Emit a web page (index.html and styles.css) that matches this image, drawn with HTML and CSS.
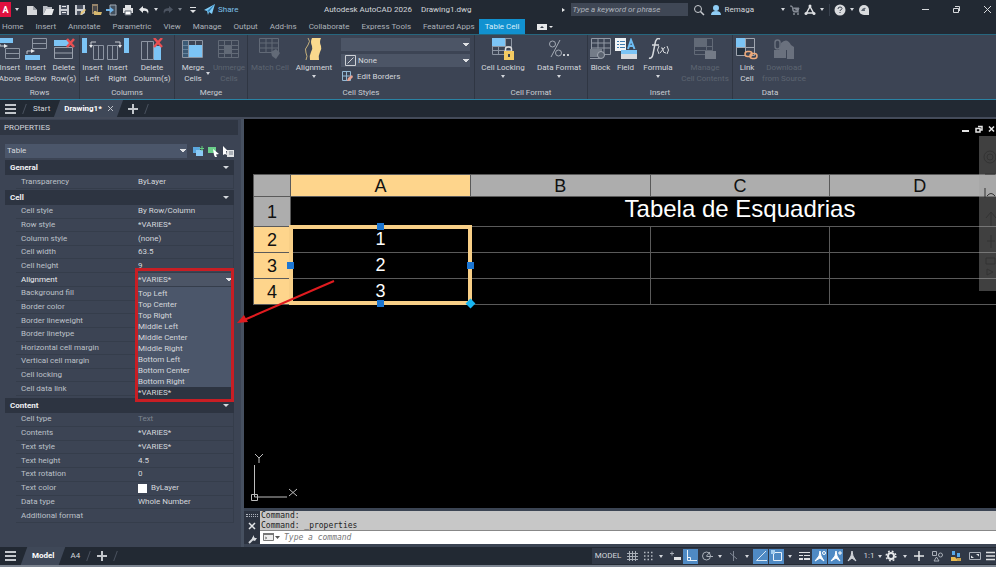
FILE: index.html
```html
<!DOCTYPE html>
<html lang="en">
<head>
<meta charset="utf-8">
<title>Autodesk AutoCAD 2026 - Drawing1.dwg</title>
<link rel="stylesheet" href="styles.css">
</head>
<body>
<header class="titlebar">
  <nav class="quick" aria-label="Quick access">
    <button class="logo" aria-label="Application menu">A</button>
    <i class="caret"></i>
    <button class="tool" aria-label="New"><svg width="12" height="12" viewBox="0 0 12 12"><path d="M1 2h6l4 4v5H1z" fill="#d5d7da"/><path d="M7 2v4h4z" fill="#9da1a8"/></svg></button>
    <button class="tool" aria-label="Open"><svg width="12" height="12" viewBox="0 0 12 12"><path d="M1 11V2h4l1 1h4v2H4z" fill="#b7bbc2"/><path d="M4 5h8l-2 6H1z" fill="#e6e7e9"/></svg></button>
    <button class="tool" aria-label="Save"><svg width="12" height="12" viewBox="0 0 12 12"><path d="M1 1h10v10H1z" fill="#c9ccd1"/><path d="M3 1h6v4H3zM3 7h6v4H3z" fill="#4b5260"/><path d="M4 8h4v1H4zM4 2h4v1H4z" fill="#e8e9ec"/></svg></button>
    <button class="tool" aria-label="Save as"><svg width="12" height="12" viewBox="0 0 12 12"><path d="M1 1h10v8L8 11H1z" fill="#c9ccd1"/><path d="M3 1h6v4H3zM3 7h4v4H3z" fill="#4b5260"/><path d="M6 11l1-3 4-3 1 1-4 4z" fill="#e8c878"/></svg></button>
    <button class="tool" aria-label="Open from web"><svg width="12" height="12" viewBox="0 0 12 12"><path d="M2 0h6v10H2z" fill="#97846a"/><path d="M3 2h4v6H3z" fill="#4c4a4b"/><path d="M4 11V7h2l1 1h5l-1 3z" fill="#d6b86e"/></svg></button>
    <button class="tool" aria-label="Save to web"><svg width="12" height="12" viewBox="0 0 12 12"><path d="M4 1h6v10H4z" fill="#43505e" stroke="#a2abb5"/><path d="M0 5h4V3l4 3-4 3V7H0z" fill="#6fb4ea"/></svg></button>
    <button class="tool" aria-label="Plot"><svg width="12" height="12" viewBox="0 0 12 12"><path d="M3 1h6v3H3zM1 4h10v5H1z" fill="#dedfe2"/><path d="M3 7h6v4H3z" fill="#fff" stroke="#5b626e"/></svg></button>
    <button class="tool" aria-label="Undo"><svg width="12" height="12" viewBox="0 0 12 12"><path d="M5 2L1 5.500l4 3.500V7q4-1 5 3 2-6-5-6z" fill="#e6e8ea"/></svg></button>
    <i class="caret"></i>
    <button class="tool" aria-label="Redo"><svg width="12" height="12" viewBox="0 0 12 12"><path d="M7 2l4 3.500L7 9V7q-4-1-5 3-2-6 5-6z" fill="#4c5461"/></svg></button>
    <i class="caret dim"></i>
    <button class="tool narrow" aria-label="Customize"><svg width="8" height="12" viewBox="0 0 8 12"><path d="M1 3.500h6" stroke="#dfe1e4"/><path d="M1 6h6L4 9z" fill="#dfe1e4"/></svg></button>
    <a class="share" href="#"><svg width="11" height="11" viewBox="0 0 11 11"><path d="M0 6L11 0 8 10 5 8 4 11 3 7z" fill="#7fcbf7"/><path d="M3 7l8-7-6 8z" fill="#2f7fb4"/></svg>Share</a>
  </nav>
  <h1 class="apptitle"><span>Autodesk AutoCAD 2026</span><span>Drawing1.dwg</span></h1>
  <div class="account">
    <i class="caret right"></i>
    <input class="search" type="text" aria-label="Search" placeholder="Type a keyword or phrase">
    <button class="tool" aria-label="Find"><svg width="12" height="12" viewBox="0 0 12 12"><circle cx="5" cy="5" r="3.500" fill="none" stroke="#c9ccd1"/><path d="M7.500 7.500L11 11" stroke="#c9ccd1" stroke-width="1.500"/></svg></button>
    <button class="user"><svg width="12" height="12" viewBox="0 0 12 12"><circle cx="6" cy="4" r="3" fill="#8fcdf5"/><path d="M1 11q0-4 5-4t5 4z" fill="#8fcdf5"/></svg>Remaga</button>
    <i class="caret"></i>
    <button class="tool" aria-label="Store"><svg width="12" height="12" viewBox="0 0 12 12"><path d="M1 2h2l1.500 6H10M4 4h6L9 7H4z" fill="#858b95" stroke="#858b95"/><circle cx="5" cy="10" r="1" fill="#858b95"/><circle cx="9" cy="10" r="1" fill="#858b95"/></svg></button>
    <button class="tool" aria-label="Autodesk app store"><svg width="12" height="12" viewBox="0 0 12 12"><path d="M6 2.500L2.500 9h7z" fill="none" stroke="#dfe1e4" stroke-width="1.500"/><circle cx="6" cy="2" r="1.500" fill="#dfe1e4"/><circle cx="2" cy="9.500" r="1.500" fill="#dfe1e4"/><circle cx="10" cy="9.500" r="1.500" fill="#dfe1e4"/></svg></button>
    <i class="caret"></i>
    <i class="rule"></i>
    <button class="tool" aria-label="Help"><svg width="12" height="12" viewBox="0 0 12 12"><circle cx="6" cy="6" r="5.500" fill="#d9dbde"/><path d="M4 5q0-2 2-2t2 1.500Q8 5.500 6 6.500V7" fill="none" stroke="#3a424e"/><path d="M5.500 8h1v1h-1z" fill="#3a424e"/></svg></button>
    <i class="caret"></i>
    <button class="tool" aria-label="Assistant"><svg width="12" height="12" viewBox="0 0 12 12"><path d="M6 1a5 5 0 0 0 0 10h5V6a5 5 0 0 0-5-5z" fill="#d9dbde"/><path d="M3 7q2-4 5-3-2 1-1 3z" fill="#5c6470"/></svg></button>
  </div>
  <div class="winctl">
    <button aria-label="Minimize"><svg width="9" height="9" viewBox="0 0 9 9"><path d="M1 4.500h7" stroke="#d7d9dc"/></svg></button>
    <button aria-label="Restore"><svg width="9" height="9" viewBox="0 0 9 9"><path d="M1.500 3.500h5v4h-5zM3 1.500h4.500V6" fill="none" stroke="#d7d9dc"/></svg></button>
    <button aria-label="Close"><svg width="9" height="9" viewBox="0 0 9 9"><path d="M1 1l7 7M8 1L1 8" stroke="#d7d9dc"/></svg></button>
  </div>
</header>

<nav class="tabs" aria-label="Ribbon tabs">
  <a href="#">Home</a><a href="#">Insert</a><a href="#">Annotate</a><a href="#">Parametric</a><a href="#">View</a><a href="#">Manage</a><a href="#">Output</a><a href="#">Add-ins</a><a href="#">Collaborate</a><a href="#">Express Tools</a><a href="#">Featured Apps</a><a href="#" class="active">Table Cell</a>
  <button class="ribbonmode" aria-label="Minimize ribbon"><svg width="16" height="6" viewBox="0 0 16 6"><path d="M0 0h10v6H0z" fill="#e8e9eb"/><path d="M3 4h4L5 2z" fill="#39414d"/><path d="M12 2h4l-2 2z" fill="#e8e9eb"/></svg></button>
</nav>

<section class="ribbon">
  <section class="panel rows">
    <div class="cmds">
      <button class="cmd"><svg width="22" height="22" viewBox="0 0 22 22"><path d="M0 0h14v5H0z" fill="#7cc4f5"/><path d="M6.500 10.500h14v10h-14zM6.500 15.500h14" fill="none" stroke="#8d95a2"/><path d="M1 6v2h5" fill="none" stroke="#c6cad0"/><path d="M5 6l4 2-4 2z" fill="#e7e9eb"/></svg><span>Insert<br>Above</span></button>
      <button class="cmd"><svg width="22" height="22" viewBox="0 0 22 22"><path d="M7.500.500h14v10h-14zM7.500 5.500h14" fill="none" stroke="#8d95a2"/><path d="M0 17h15v5H0z" fill="#7cc4f5"/><path d="M2 16v-3h5" fill="none" stroke="#c6cad0"/><path d="M6 11l4 2-4 2z" fill="#e7e9eb"/></svg><span>Insert<br>Below</span></button>
      <button class="cmd"><svg width="22" height="22" viewBox="0 0 22 22"><path d="M1.500 9.500h18v11h-18zM1.500 15h18" fill="none" stroke="#9aa1ac"/><path d="M1 2h13l4 3-4 3H1z" fill="#7cc4f5"/><path d="M14 1l7 8M21 1l-7 8" stroke="#e84f52" stroke-width="2.500"/></svg><span>Delete<br>Row(s)</span></button>
    </div>
    <h2>Rows</h2>
  </section>
  <section class="panel columns">
    <div class="cmds">
      <button class="cmd"><svg width="22" height="22" viewBox="0 0 22 22"><path d="M0 0h5v15H0z" fill="#7cc4f5"/><path d="M11.500 7.500h10v14h-10zM16.500 7.500v14" fill="none" stroke="#8d95a2"/><path d="M9 8V4h5" fill="none" stroke="#c6cad0"/><path d="M7 7h4l-2 3z" fill="#e7e9eb"/></svg><span>Insert<br>Left</span></button>
      <button class="cmd"><svg width="22" height="22" viewBox="0 0 22 22"><path d="M17 0h5v15h-5z" fill="#7cc4f5"/><path d="M.500 7.500h10v14H.500zM5.500 7.500v14" fill="none" stroke="#8d95a2"/><path d="M13 8V4H8" fill="none" stroke="#c6cad0"/><path d="M11 7h4l-2 3z" fill="#e7e9eb"/></svg><span>Insert<br>Right</span></button>
      <button class="cmd"><svg width="22" height="22" viewBox="0 0 22 22"><path d="M.500 3.500h12v18H.500zM6.500 3.500v18" fill="none" stroke="#8d95a2"/><path d="M13 8h7v14h-7z" fill="#7cc4f5"/><path d="M13 0l8 9M21 0l-8 9" stroke="#e84f52" stroke-width="2.500"/></svg><span>Delete<br>Column(s)</span></button>
    </div>
    <h2>Columns</h2>
  </section>
  <section class="panel merge">
    <div class="cmds">
      <button class="cmd"><svg width="22" height="22" viewBox="0 0 22 22"><path d="M.500 2.500h20v17H.500zM.500 7.500h20M.500 11.500h7M.500 15.500h7M6.500 2.500v17M13.500 2.500v5" fill="none" stroke="#8d95a2"/><path d="M1 3h5v16H1z" fill="#3b6f95" opacity=".5"/><path d="M7 7h13v12H7z" fill="#7cc4f5"/></svg><span>Merge<i class="caret tiny"></i><br>Cells</span></button>
      <button class="cmd off"><svg width="22" height="22" viewBox="0 0 22 22"><path d="M.500 2.500h20v17H.500zM.500 7.500h20M.500 11.500h20M.500 15.500h20M6.500 2.500v17M13.500 2.500v17" fill="none" stroke="#626a77"/><path d="M7 7h7v9H7z" fill="#626a77"/></svg><span>Unmerge<br>Cells</span></button>
    </div>
    <h2>Merge</h2>
  </section>
  <section class="panel styles">
    <div class="cmds">
      <button class="cmd off"><svg width="22" height="22" viewBox="0 0 22 22"><path d="M.500.500h19v14H.500zM.500 5h19M.500 10h19M7 .500v14M13 .500v14" fill="none" stroke="#626a77"/><path d="M12 14l5-3 4 4-4 6-4-3z" fill="#626a77"/></svg><span>Match Cell</span></button>
      <button class="cmd"><svg width="22" height="22" viewBox="0 0 22 22"><path d="M5 0q3 3 0 7-4 4-2 8 2 3 0 7" fill="none" stroke="#c7b27c"/><path d="M9 0h9q-2 4 0 8 1 3-1 6-2 4-1 8H7q-1-4 1-8 2-3 1-6-2-4 0-8z" fill="#fad98d"/></svg><span>Alignment</span><i class="caret"></i></button>
      <div class="stack">
        <select class="combo" aria-label="Cell style"><option></option></select>
        <div class="combo-wrap"><svg width="11" height="11" viewBox="0 0 11 11"><path d="M.500.500h10v10H.500zM2.500 8.500l6-6" fill="none" stroke="#cdd0d5"/></svg><select class="combo pad" aria-label="Background fill"><option>None</option></select></div>
        <button class="edit"><svg width="11" height="11" viewBox="0 0 11 11"><path d="M.500.500h8v9h-8zM4.500.500v9M.500 5h8" fill="none" stroke="#94b8d4"/><path d="M5 10l1-3 4-3 1 2-4 4z" fill="#e5a190"/></svg>Edit Borders</button>
      </div>
    </div>
    <h2>Cell Styles</h2>
  </section>
  <section class="panel format">
    <div class="cmds">
      <button class="cmd"><svg width="22" height="22" viewBox="0 0 22 22"><path d="M.500.500h19v16H.500zM.500 8.500h19M.500 12.500h19M6.500 8v8.500M13.500.500v16" fill="none" stroke="#8d95a2"/><path d="M0 0h13v8H0z" fill="#7cc4f5"/><path d="M13.500 13v-2q0-2 3-2t3 2v2" fill="none" stroke="#ddd" stroke-width="1.500"/><path d="M12 13h10v9H12z" fill="#f4cb62"/><path d="M16 16h2v3h-2z" fill="#3b4453"/></svg><span>Cell Locking</span><i class="caret"></i></button>
      <button class="cmd"><svg width="22" height="22" viewBox="0 0 22 22"><circle cx="4.500" cy="6" r="3" fill="none" stroke="#a4aab4"/><circle cx="10.500" cy="15" r="3" fill="none" stroke="#a4aab4"/><path d="M12 2L3 19" stroke="#a4aab4"/><path d="M15 16h2v2h-2zM19 16h2v2h-2z" fill="#c8ccd1"/></svg><span>Data Format</span><i class="caret"></i></button>
    </div>
    <h2>Cell Format</h2>
  </section>
  <section class="panel insert">
    <div class="cmds">
      <button class="cmd"><svg width="22" height="22" viewBox="0 0 22 22"><path d="M1.500.500h19v16h-19zM1.500 5h19M1.500 10h19M8 .500v10M14 .500v16" fill="none" stroke="#9299a5"/><path d="M0 11h12v8H0z" fill="#747c88"/><circle cx="11" cy="17" r="3.500" fill="#5b6370" stroke="#a4aab4"/><path d="M0 20.500h10" stroke="#9299a5"/></svg><span>Block</span></button>
      <button class="cmd"><svg width="22" height="22" viewBox="0 0 22 22"><path d="M0 0h11v13H0z" fill="#f1f3f5"/><path d="M2 3.500h2M5 3.500h5M2 6.500h2M5 6.500h5M2 9.500h2M5 9.500h5" stroke="#3d7bb0"/><path d="M13 11L16 2l3.500 9M14 8h5" fill="none" stroke="#6dbcf2" stroke-width="2"/><path d="M6 12h16v9H6z" fill="#d8dadd"/><path d="M6 12h16v4H6z" fill="#7cc4f5"/></svg><span>Field</span></button>
      <button class="cmd"><svg width="22" height="22" viewBox="0 0 22 22"><path d="M13 1q-4-2-5 5L6 16q-1 5-4 4M5 7h7" fill="none" stroke="#d6d9dd" stroke-width="1.500"/><path d="M12 8q-3 4 0 8M14 10q2-1 2 2t3 3M18 9l-5 6M20 8q3 4 0 8" fill="none" stroke="#d6d9dd"/></svg><span>Formula</span><i class="caret"></i></button>
      <button class="cmd off"><svg width="22" height="22" viewBox="0 0 22 22"><path d="M.500.500h18v16H.500zM.500 8.500h18M.500 12.500h18M12.500.500v16" fill="none" stroke="#626a77"/><path d="M0 0h13v8H0z" fill="#626a77"/><path d="M11 13h11v8H11z" fill="#747b87"/></svg><span>Manage<br>Cell Contents</span></button>
    </div>
    <h2>Insert</h2>
  </section>
  <section class="panel data">
    <div class="cmds">
      <button class="cmd"><svg width="22" height="22" viewBox="0 0 22 22"><path d="M.500.500h18v17H.500zM.500 9.500h18M9.500.500v17" fill="none" stroke="#9fa5af"/><path d="M1 10h8v7H1z" fill="#24313f"/><path d="M0 0h9v9H0z" fill="#7cc4f5"/><rect x="9" y="13.500" width="7" height="5" rx="2.500" fill="#3b4453" stroke="#efab7c" stroke-width="1.500"/><rect x="14" y="15.500" width="7" height="5" rx="2.500" fill="none" stroke="#efab7c" stroke-width="1.500"/></svg><span>Link<br>Cell</span></button>
      <button class="cmd off"><svg width="22" height="22" viewBox="0 0 22 22"><path d="M1 12h12v8H1zM8 5q6-6 10 2l3 2v12h-7v-9H6z" fill="#6a717e"/><rect x="2" y="2" width="5" height="9" rx="2.500" fill="none" stroke="#6a717e" stroke-width="1.500"/></svg><span>Download<br>from Source</span></button>
    </div>
    <h2>Data</h2>
  </section>
</section>

<nav class="filetabs" aria-label="Files">
  <button class="burger" aria-label="File menu"><i></i><i></i><i></i></button>
  <i class="slash"></i>
  <a href="#">Start</a>
  <a href="#" class="current">Drawing1* <svg width="7" height="7" viewBox="0 0 7 7"><path d="M1 1l5 5M6 1L1 6" stroke="#bfc3c9"/></svg></a>
  <button class="plus" aria-label="New drawing"></button>
  <i class="slash"></i>
</nav>

<main class="work">
  <aside class="palette">
    <h2 class="ptitle">PROPERTIES</h2>
    <div class="picker">
      <select aria-label="Object type"><option>Table</option></select>
      <button aria-label="Toggle pickadd"><svg width="11" height="11" viewBox="0 0 11 11"><path d="M0 1h7v6H0z" fill="#5ba7de"/><path d="M3 4h7v6H3z" fill="#8bcaf6"/><path d="M9 0v5M6.500 2.500h5" stroke="#62d07f"/></svg></button>
      <button aria-label="Select objects"><svg width="11" height="11" viewBox="0 0 11 11"><path d="M0 1h8v6H0z" fill="#6bcf8b"/><path d="M5 3l6 5-3 .500L9 11 7 11 6 9z" fill="#fff"/></svg></button>
      <button aria-label="Quick select"><svg width="11" height="11" viewBox="0 0 11 11"><path d="M0 0l5 5H3l1 4-2-1-2 1z" fill="#fff"/><path d="M4 4h7v7H4z" fill="#e2e4e6"/><path d="M6 6h4M6 8h4" stroke="#737b86"/></svg></button>
    </div>
    <h3>General<i class="caret big"></i></h3>
    <div class="props one">
      <div><label for="p1">Transparency</label><input id="p1" value="ByLayer"></div>
    </div>
    <h3>Cell<i class="caret big"></i></h3>
    <div class="props cell">
      <div><label for="c1">Cell style</label><input id="c1" value="By Row/Column"></div>
      <div><label for="c2">Row style</label><input id="c2" value="*VARIES*"></div>
      <div><label for="c3">Column style</label><input id="c3" value="(none)"></div>
      <div><label for="c4">Cell width</label><input id="c4" value="63.5"></div>
      <div><label for="c5">Cell height</label><input id="c5" value="9"></div>
      <div class="sel"><label for="c6">Alignment</label>
        <div class="dropdown">
          <select id="c6"><option>*VARIES*</option></select>
          <div class="callout"></div>
          <ul class="options">
            <li>Top Left</li><li>Top Center</li><li>Top Right</li><li>Middle Left</li><li>Middle Center</li><li>Middle Right</li><li>Bottom Left</li><li>Bottom Center</li><li>Bottom Right</li><li class="chosen">*VARIES*</li>
          </ul>
          <svg class="pointer" width="100" height="46" viewBox="0 0 100 46"><path d="M98 2L8 41" stroke="#e01b1f" stroke-width="2"/><path d="M1 44l7-8 4 7z" fill="#e01b1f"/></svg>
        </div>
      </div>
      <div><label for="c7">Background fill</label><input id="c7"></div>
      <div><label for="c8">Border color</label><input id="c8"></div>
      <div><label for="c9">Border lineweight</label><input id="c9"></div>
      <div><label for="c10">Border linetype</label><input id="c10"></div>
      <div><label for="c11">Horizontal cell margin</label><input id="c11"></div>
      <div><label for="c12">Vertical cell margin</label><input id="c12"></div>
      <div><label for="c13">Cell locking</label><input id="c13"></div>
      <div><label for="c14">Cell data link</label><input id="c14"></div>
    </div>
    <h3>Content<i class="caret big"></i></h3>
    <div class="props content">
      <div><label for="t1">Cell type</label><input id="t1" value="Text" disabled></div>
      <div><label for="t2">Contents</label><input id="t2" value="*VARIES*"></div>
      <div><label for="t3">Text style</label><input id="t3" value="*VARIES*"></div>
      <div><label for="t4">Text height</label><input id="t4" value="4.5"></div>
      <div><label for="t5">Text rotation</label><input id="t5" value="0"></div>
      <div class="color"><label for="t6">Text color</label><i class="swatch"></i><input id="t6" value="ByLayer"></div>
      <div><label for="t7">Data type</label><input id="t7" value="Whole Number"></div>
      <div><label for="t8">Additional format</label><input id="t8"></div>
    </div>
  </aside>

  <section class="viewport">
    <div class="canvas">
      <div class="docctl">
        <button aria-label="Minimize drawing"><svg width="8" height="8" viewBox="0 0 8 8"><path d="M0 5h7v2H0z" fill="#e4e4e4"/></svg></button>
        <button aria-label="Restore drawing"><svg width="8" height="8" viewBox="0 0 8 8"><path d="M1 3.500h4v3.500H1zM3 1.500h4V5H5" fill="none" stroke="#e4e4e4" stroke-width="1.500"/></svg></button>
        <button aria-label="Close drawing"><svg width="8" height="8" viewBox="0 0 8 8"><path d="M1 1.500l5 5M6 1.500l-5 5" stroke="#e4e4e4" stroke-width="1.500"/></svg></button>
      </div>
      <div class="sheet">
        <table>
          <colgroup><col class="idx"><col><col><col><col><col></colgroup>
          <tr class="heads"><th></th><th class="on">A</th><th>B</th><th>C</th><th>D</th><th></th></tr>
          <tr class="title"><th>1</th><td colspan="5">Tabela de Esquadrias</td></tr>
          <tr><th class="on">2</th><td>1</td><td></td><td></td><td></td><td></td></tr>
          <tr><th class="on">3</th><td>2</td><td></td><td></td><td></td><td></td></tr>
          <tr><th class="on">4</th><td>3</td><td></td><td></td><td></td><td></td></tr>
        </table>
        <div class="selection"><i class="grip n"></i><i class="grip w"></i><i class="grip e"></i><i class="grip s"></i><i class="grip fill"></i></div>
      </div>
      <div class="navbar">
        <svg width="17" height="155" viewBox="0 0 17 155" fill="none" stroke="#333"><circle cx="11" cy="21" r="6"/><circle cx="11" cy="21" r="3"/><path d="M6 38h10M8 60q4-5 8 0M6 52v10M7 82l5-6 5 6M12 76v14M8 105h8M12 99v13M7 122h9v6H7zM8 133l6 3-6 3z"/></svg>
      </div>
      <svg class="ucs" width="50" height="54" viewBox="0 0 50 54" fill="none" stroke="#bdbdbd"><path d="M4.500 16v32H37M1.500 45.500h6v6h-6zM5 5l4 4 4-4M9 9v5M39 40l8 7M47 40l-8 7"/></svg>
    </div>
    <div class="command">
      <div class="cmdside">
        <i class="dots"></i>
        <button aria-label="Close command line"><svg width="8" height="8" viewBox="0 0 8 8"><path d="M1 1l6 6M7 1L1 7" stroke="#e3e5e8" stroke-width="1.500"/></svg></button>
        <button aria-label="Customize command line"><svg width="9" height="9" viewBox="0 0 9 9"><path d="M1 8l4-4" stroke="#d7dade" stroke-width="2"/><path d="M4 3l2-3v2l1 1h2L7 6 4 5z" fill="#d7dade"/></svg></button>
      </div>
      <div class="cmdmain">
        <div class="history"><p>Command:</p><p>Command: _properties</p></div>
        <div class="prompt"><svg width="17" height="9" viewBox="0 0 17 9"><path d="M.500.500h10v7H.500z" fill="#eee" stroke="#777"/><path d="M0 0h11v2H0z" fill="#777"/><path d="M2 4l2 1-2 1" fill="none" stroke="#888"/><path d="M12 3h5l-2.500 3z" fill="#555"/></svg><input type="text" aria-label="Command" placeholder="Type a command"></div>
      </div>
    </div>
  </section>
</main>

<footer class="status">
  <nav class="layouts" aria-label="Layouts">
    <button class="burger" aria-label="Layout menu"><i></i><i></i><i></i></button>
    <a href="#" class="current">Model</a>
    <a href="#">A4</a>
    <i class="slash"></i>
    <button class="plus" aria-label="New layout"></button>
    <i class="slash"></i>
  </nav>
  <div class="toggles">
    <button class="model">MODEL</button>
    <button aria-label="Grid"><svg width="12" height="12" viewBox="0 0 12 12"><path d="M3.500 1v10M6.500 1v10M9.500 1v10M1 3.500h11M1 6.500h11M1 9.500h11" stroke="#a9afb8"/></svg></button>
    <button aria-label="Snap"><svg width="12" height="12" viewBox="0 0 12 12"><path d="M2 2.500h10M2 6h10M2 9.500h10" stroke="#b5bac2" stroke-width="1.500" stroke-dasharray="1.500 2"/></svg></button>
    <i class="caret wide"></i>
    <button aria-label="Dynamic input"><svg width="12" height="12" viewBox="0 0 12 12"><path d="M1 3.500h4M3 1.500v4" stroke="#a9afb8"/><path d="M5 7h7v3H5z" fill="#e2e4e6"/></svg></button>
    <button class="lit" aria-label="Ortho"><svg width="12" height="12" viewBox="0 0 12 12"><path d="M2.500 0v10.500H12M2.500 7.500h3v3" fill="none" stroke="#e8f1f9"/></svg></button>
    <button aria-label="Polar tracking"><svg width="12" height="12" viewBox="0 0 12 12"><circle cx="5.500" cy="6" r="4" fill="none" stroke="#a9afb8"/><path d="M5.500 6.500H12M5.500 6L9 2" stroke="#a9afb8"/></svg></button>
    <i class="caret wide"></i>
    <button aria-label="Isometric"><svg width="12" height="12" viewBox="0 0 12 12"><path d="M5.500 1v10M2 3l7 6" stroke="#7e8693"/></svg></button>
    <i class="caret wide"></i>
    <button class="lit" aria-label="Object snap tracking"><svg width="12" height="12" viewBox="0 0 12 12"><path d="M11 1L1.500 10.500H12" fill="none" stroke="#dce9f5"/></svg></button>
    <button class="lit" aria-label="Object snap"><svg width="12" height="12" viewBox="0 0 12 12"><path d="M2.500 2.500h8v8h-8z" fill="none" stroke="#e8f1f9"/><path d="M0 0h4v4H0z" fill="#a3cdf0"/></svg></button>
    <i class="caret wide"></i>
    <button aria-label="Lineweight"><svg width="12" height="12" viewBox="0 0 12 12"><path d="M1 2.500h11M1 5.500h4M6 5.500h6" stroke="#dfe1e4"/><path d="M1 9h4M6 9h6" stroke="#dfe1e4" stroke-width="2"/></svg></button>
    <button class="lit" aria-label="Annotation visibility"><svg width="12" height="12" viewBox="0 0 12 12"><path d="M6 1L7 6 10 11 6 8 1 11 5 6z" fill="#fff" stroke="#fff"/><circle cx="10" cy="3" r="1.500" fill="none" stroke="#fff"/></svg></button>
    <button class="lit" aria-label="Auto scale"><svg width="12" height="12" viewBox="0 0 12 12"><path d="M6 1L7 6 10 11 6 8 1 11 5 6z" fill="#fff" stroke="#fff"/><path d="M10 1v4M8 3h4" stroke="#fff"/></svg></button>
    <button aria-label="Annotation scale"><svg width="12" height="12" viewBox="0 0 12 12"><path d="M6 1L7 6 10 11 6 8 2 11 5 6z" fill="#d0d3d8" stroke="#d0d3d8"/></svg></button>
    <button class="scale">1:1</button>
    <i class="caret"></i>
    <button class="gear" aria-label="Workspace"><svg width="12" height="12" viewBox="0 0 12 12"><circle cx="6" cy="6" r="3" fill="none" stroke="#e5e7e9" stroke-width="2"/><circle cx="6" cy="6" r="4.800" fill="none" stroke="#e5e7e9" stroke-width="1.500" stroke-dasharray="1.800 2"/></svg></button>
    <i class="caret wide"></i>
    <button aria-label="Annotation monitor"><svg width="12" height="12" viewBox="0 0 12 12"><path d="M6 1v10M1 6h10" stroke="#e5e7e9" stroke-width="1.500"/></svg></button>
    <button class="roomy" aria-label="Isolate objects"><svg width="12" height="12" viewBox="0 0 12 12"><path d="M1.500 1.500h4v4h-4zM3 11l2.500-4L8 11z" fill="none" stroke="#a9afb8"/><circle cx="9.500" cy="5" r="2" fill="none" stroke="#a9afb8"/></svg></button>
    <button class="roomy" aria-label="Graphics performance"><svg width="12" height="12" viewBox="0 0 12 12"><path d="M2 1h3v4H2zM7 3h3v4H7z" fill="#58a8e8"/><path d="M1 7h4l4 4H1z" fill="#e7b94e"/><path d="M7 8h4v3H7z" fill="#c9a14b"/></svg></button>
    <button class="roomy" aria-label="Clean screen"><svg width="12" height="12" viewBox="0 0 12 12"><path d="M.500 2.500h11v7H.500z" fill="none" stroke="#a9afb8"/><path d="M7 4h3v2.500zM5 8H2V5.500z" fill="#dfe1e4"/></svg></button>
    <button class="last" aria-label="Customization"><svg width="10" height="12" viewBox="0 0 10 12"><path d="M1 2.500h9M1 6h9M1 9.500h9" stroke="#dfe1e4" stroke-width="1.500"/></svg></button>
  </div>
</footer>
</body>
</html>
```
FILE: styles.css
```css
* { box-sizing: border-box; }
body {
  margin: 0;
  min-height: 100vh;
  display: flex;
  flex-direction: column;
  overflow: hidden;
  background: #222933;
  color: #d4d7dc;
  font: 8px/10px Roboto, "Liberation Sans", sans-serif;
}
h1, h2, h3, p, ul { margin: 0; padding: 0; font-size: inherit; font-weight: normal; list-style: none; }
a { color: inherit; text-decoration: none; }
button, input, select {
  margin: 0;
  padding: 0;
  border: 0;
  border-radius: 0;
  background: none;
  color: inherit;
  font: inherit;
}
button { display: flex; align-items: center; justify-content: center; }
select { appearance: none; }
input { min-width: 0; }
svg { display: block; flex: none; }

.caret {
  flex: none;
  width: 4px;
  border: 2px solid transparent;
  border-top: 3px solid #d4d7dc;
  border-bottom: 0;
}
.caret.dim { border-top-color: #7d848f; }
.caret.right { border: 2px solid transparent; border-left: 3px solid #e4e6e8; border-right: 0; }
.caret.big { border-width: 3px 3px 0; width: 6px; }
.caret.wide { margin: 0 4px 0 3px; }

/* Title bar */
.titlebar { display: flex; align-items: center; height: 19px; }
.quick { display: flex; align-items: center; gap: 4px; flex: 0 0 324px; }
.logo { width: 11px; height: 15px; background: #e0113f; color: #fff; font-size: 9px; font-weight: bold; }
.quick .logo + .caret { margin-right: 3px; }
.tool { width: 12px; height: 12px; }
.narrow { width: 8px; margin: 0 3px; }
.share { display: flex; align-items: center; gap: 3px; color: #7cc0ea; }
.apptitle { display: flex; gap: 9px; flex: 1; }
.account { display: flex; align-items: center; gap: 5px; }
.search { width: 117px; height: 13px; padding: 0 2px; background: #3f4755; font-style: italic; }
.search::placeholder { color: #aeb3bc; opacity: 1; }
.account .tool { margin: 0 -1px; }
.account .search + .tool { margin: 0; }
.user { gap: 3px; margin-right: 22px; }
.rule { width: 1px; height: 12px; background: #39414d; }
.winctl { display: flex; gap: 22px; margin: 0 4px 0 52px; }

/* Ribbon tabs */
.tabs { display: flex; align-items: center; height: 15px; padding-left: 2px; gap: 12px; color: #adb2ba; white-space: nowrap; }
.tabs .active { align-self: stretch; padding: 3px 6px 2px; margin: 0 0 0 -8px; background: #1191d0; color: #d9effa; line-height: 10px; }

/* Ribbon */
.ribbon { display: flex; height: 66px; background: #3c4454; border-top: 1px solid #26667e; border-bottom: 1px solid #2a83a4; }
.panel { display: flex; flex-direction: column; flex: none; border-right: 1px solid #2f3643; overflow: hidden; }
.panel h2 { text-align: center; line-height: 12px; color: #c9ccd2; }
.cmds { display: flex; flex: 1; padding-top: 3px; }
.cmd { flex-direction: column; justify-content: flex-start; gap: 2px; line-height: 11px; white-space: nowrap; }
.cmd span { display: block; text-align: center; position: relative; }
.off { color: #5d6471; }
.tiny { position: absolute; top: 10px; right: -6px; }
.rows { width: 80px; }
.rows .cmds { margin-left: -3px; }
.rows .cmd { flex: 26; }
.rows .cmd:last-child { flex: 31; }
.columns { width: 95px; }
.columns .cmd { flex: 0 0 25px; }
.columns .cmd:last-child { flex: 1; }
.merge { width: 73px; }
.merge .cmd { flex: 1; }
.styles { width: 227px; }
.styles .cmd { flex: 0 0 44px; }
.format { width: 113px; }
.format .cmd { flex: 1; }
.insert { width: 145px; }
.insert .cmd { flex: 0 0 25px; }
.insert .cmd:nth-child(3) { flex: 0 0 40px; }
.insert .cmd:last-child { flex: 1; }
.data { width: 74px; border: 0; }
.data .cmd { flex: 0 0 28px; }
.data .cmd:last-child { flex: 1; }
.stack { display: flex; flex-direction: column; gap: 3px; flex: 1; padding: 0 4px 0 5px; }
.combo { width: 100%; height: 13px; }
.combo, .picker select, .dropdown select {
  background-color: #4c5566;
  background-image: linear-gradient(to top right, transparent 50%, #dfe1e4 50%), linear-gradient(to top left, transparent 50%, #dfe1e4 50%);
  background-size: 3px 4px;
  background-position: right 4px center, right 1px center;
  background-repeat: no-repeat;
}
.combo-wrap { position: relative; display: flex; align-items: center; }
.combo-wrap svg { position: absolute; left: 4px; }
.pad { padding-left: 17px; }
.edit { gap: 4px; align-self: flex-start; margin-left: 1px; height: 13px; }

/* File tabs */
.filetabs { display: flex; align-items: center; height: 17px; padding-left: 5px; }
.burger { flex-direction: column; gap: 2px; width: 11px; }
.burger i { width: 11px; height: 2px; background: #c3c7cc; }
.slash { width: 1px; height: 10px; margin: 0 8px; background: #4a525f; transform: skewX(-20deg); }
.filetabs .current, .layouts .current { position: relative; z-index: 0; color: #fff; font-weight: bold; }
.filetabs .current::before, .layouts .current::before {
  content: "";
  position: absolute;
  z-index: -1;
  inset: 0;
  background: #3f4858;
  transform: skewX(-20deg);
}
.filetabs .current { display: flex; align-items: center; gap: 5px; height: 17px; margin-left: 7px; padding: 0 6px 0 7px; }
.plus {
  width: 10px;
  height: 10px;
  background: linear-gradient(#c3c7cc, #c3c7cc) center / 10px 2px no-repeat, linear-gradient(#c3c7cc, #c3c7cc) center / 2px 10px no-repeat;
}
.filetabs .plus { margin-left: 8px; }

/* Work area */
.work { display: flex; flex: 1; border-top: 2px solid #444b5a; }
.palette { flex: none; width: 244px; background: #3c4454; padding: 1px 7px 0 5px; border-right: 3px solid #465060; }
.ptitle { height: 15px; margin: 0 -4px 9px -5px; padding: 2px 4px; background: #2f3643; line-height: 11px; }
.picker { display: flex; gap: 4px; align-items: center; margin-bottom: 2px; }
.picker select { flex: 1; height: 14px; padding-left: 2px; margin-right: 2px; background-color: #4b566a; }
.palette h3 { display: flex; align-items: center; justify-content: space-between; height: 15px; padding: 0 5px; background: #2d3441; color: #f0f1f3; font-weight: bold; }
.props { display: grid; grid-auto-rows: 1fr; margin: 0 0 1px 11px; border-right: 1px solid #353d4b; }
.props > div { display: flex; align-items: center; min-width: 0; padding-left: 5px; border-bottom: 1px solid #353d4b; }
.props label { flex: 0 0 117px; color: #bcc1c9; }
.props input { flex: 1; width: 0; height: 10px; line-height: 10px; }
.props input:disabled { color: #7d8490; }
.props .sel label { color: #eceef0; }
.props.one { height: 14px; }
.props.cell { height: 191px; margin-bottom: 2px; }
.props.content { height: 110px; }
.swatch { width: 9px; height: 9px; margin-right: 4px; background: #fff; }
.dropdown { position: relative; flex: 1; align-self: stretch; }
.dropdown select { width: 100%; height: 13px; display: block; }
.options { position: absolute; z-index: 1; top: 14px; left: -2px; right: 0; padding-top: 1px; background: #4b566a; line-height: 11px; }
.options li { padding-left: 2px; }
.options .chosen { background: #2d3441; }
.callout { position: absolute; z-index: 2; top: -5px; left: -3px; width: 99px; height: 134px; border: 3px solid #c81e24; }
.pointer { position: absolute; z-index: 3; top: 6px; left: 98px; }

/* Drawing */
.viewport { display: flex; flex-direction: column; flex: 1; min-width: 0; }
.canvas { position: relative; flex: 1; overflow: hidden; background: #000; }
.docctl { display: flex; justify-content: flex-end; gap: 5px; height: 17px; padding-top: 3px; align-items: center; }
.sheet { position: relative; width: 937px; margin: 38px 0 0 9px; }
.sheet table { width: 100%; table-layout: fixed; border-collapse: collapse; color: #fff; font: 18px/20px "Liberation Sans", sans-serif; text-align: center; }
.idx { width: 37px; }
.sheet tr { height: 26px; }
.sheet .heads { height: 22px; }
.sheet .title { height: 30px; }
.sheet th, .sheet td { padding: 0; border: 1px solid #5a5a5a; font-weight: normal; }
.sheet td { line-height: 24px; vertical-align: top; }
.sheet th { background: #adadad; color: #111; }
.sheet th.on { background: #fed58c; }
.sheet .title td { font-size: 24px; border-top-color: #ddd; }
.selection { position: absolute; left: 36px; top: 51px; width: 183px; height: 80px; border: 4px solid #f8cf87; }
.grip { position: absolute; width: 7px; height: 7px; background: #1c76d2; }
.n { left: 84px; top: -6px; }
.s { left: 84px; bottom: -6px; }
.w { left: -6px; top: 33px; }
.e { right: -6px; top: 33px; }
.fill { right: -6px; bottom: -6px; background: #17b6f2; transform: rotate(45deg); }
.navbar { position: absolute; top: 17px; right: 0; width: 17px; background: rgba(160, 160, 160, .4); }
.ucs { position: absolute; left: 6px; bottom: 5px; }

/* Command line */
.command { display: flex; height: 39px; background: #3b4453; padding: 3px 0; }
.cmdside { display: flex; flex-direction: column; align-items: center; justify-content: space-between; width: 16px; background: #2c3340; padding: 3px 0 0; }
.dots { width: 12px; height: 3px; border: 1px dotted #aeb3bc; border-width: 1px 0; }
.cmdmain { flex: 1; display: flex; flex-direction: column; font: 8px/10px "DejaVu Sans Mono", monospace; }
.history { height: 20px; padding-left: 1px; background: #c7c7c7; color: #222; border-bottom: 1px solid #888; }
.prompt { display: flex; flex: 1; align-items: center; gap: 4px; padding-left: 3px; background: #fff; color: #222; }
.prompt input { flex: 1; font-style: italic; }
.prompt input::placeholder { color: #777; opacity: 1; }

/* Status bar */
.status { display: flex; align-items: center; justify-content: space-between; height: 20px; border-bottom: 2px solid #7c8490; }
.layouts { display: flex; align-items: center; padding-left: 5px; }
.layouts .current { margin: 0 8px; padding: 4px 8px; }
.toggles { display: flex; align-items: center; height: 16px; background: #303846; }
.toggles button { width: 16px; height: 15px; }
.toggles .lit { background: #4f8ac4; border-right: 1px solid #303846; }
.toggles .model { width: 32px; }
.toggles .scale { width: 18px; }
.toggles .gear { width: 18px; }
.toggles .roomy { width: 19px; }
.toggles .last { width: 12px; }
```
